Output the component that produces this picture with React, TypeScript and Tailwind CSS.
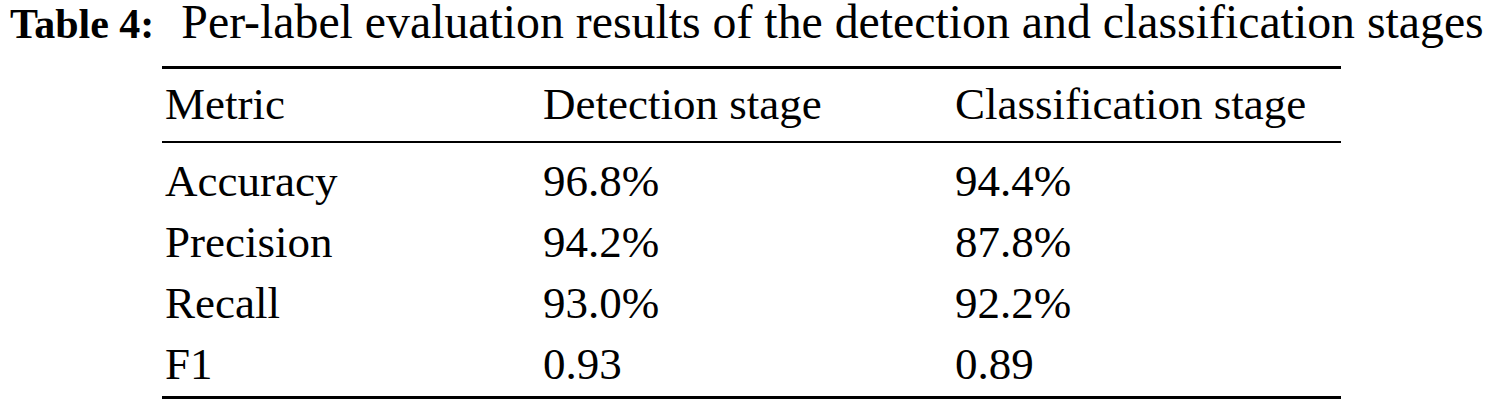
const rows = [
  { metric: "Accuracy", detection: "96.8%", classification: "94.4%" },
  { metric: "Precision", detection: "94.2%", classification: "87.8%" },
  { metric: "Recall", detection: "93.0%", classification: "92.2%" },
  { metric: "F1", detection: "0.93", classification: "0.89" },
];

export default function App() {
  return (
    <div className="w-[1496px] h-[404px] bg-white text-black font-['Liberation_Serif'] overflow-hidden">
      {/* Caption */}
      <div className="flex items-baseline pl-[10px] leading-[43px] whitespace-nowrap">
        <span className="font-bold text-[42px]">Table 4:</span>
        <span className="ml-[27px] text-[47.8px]">Per-label evaluation results of the detection and classification stages</span>
      </div>

      {/* Table */}
      <div className="ml-[162px] mt-[20px] w-[1179px] border-t-[3px] border-b-[3px] border-black text-[45px] leading-[61px]">
        <div className="grid grid-cols-[378px_412px_1fr] pl-[3px] pt-[5px] pb-[6px] border-b-2 border-black">
          <span>Metric</span>
          <span>Detection stage</span>
          <span>Classification stage</span>
        </div>
        <div className="pt-[8px] pb-[1px]">
          {rows.map((row) => (
            <div key={row.metric} className="grid grid-cols-[378px_412px_1fr] pl-[3px]">
              <span>{row.metric}</span>
              <span>{row.detection}</span>
              <span>{row.classification}</span>
            </div>
          ))}
        </div>
      </div>
    </div>
  );
}
